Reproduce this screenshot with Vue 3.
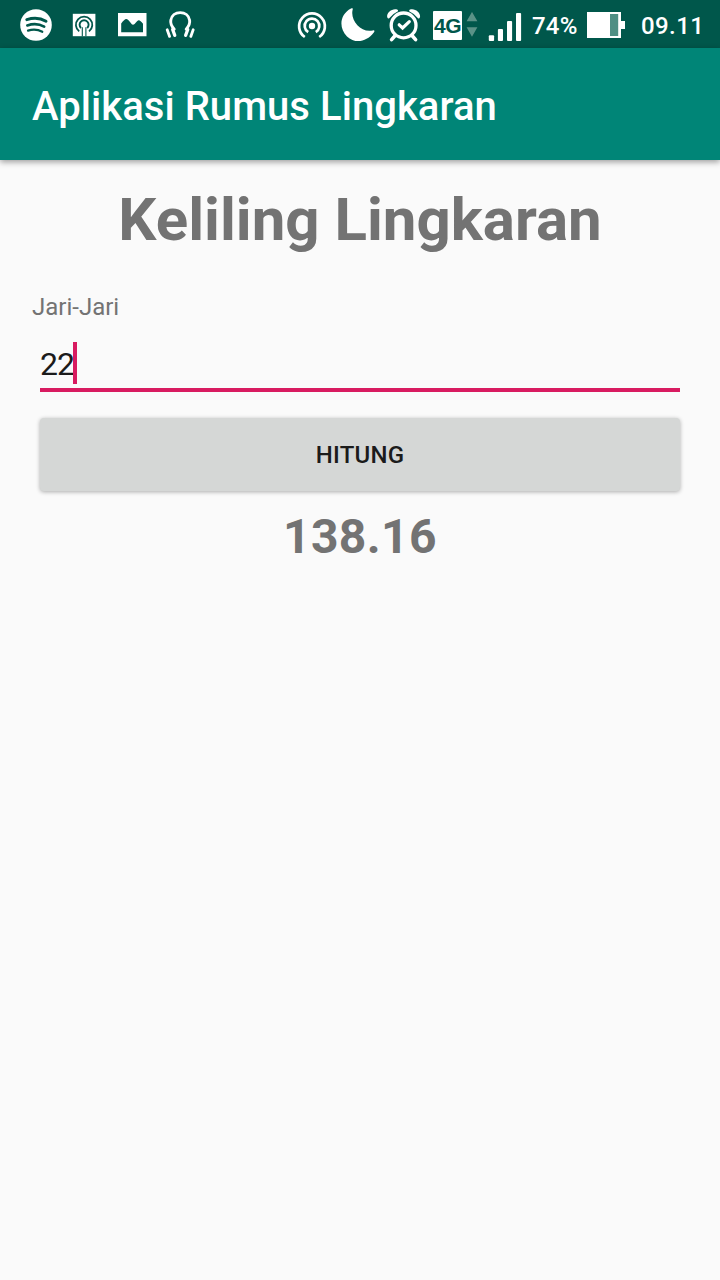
<script setup>
import { ref } from 'vue'

const radius = ref('22')
const result = ref('138.16')

function hitung() {
  result.value = (2 * 3.14 * Number(radius.value)).toFixed(2)
}
</script>

<template>
  <div class="screen">
    <header class="status">
      <div class="group left">
        <svg width="32" height="32" viewBox="20 9 32 32">
          <circle cx="36" cy="25" r="15.8" fill="#fff" />
          <g fill="none" stroke="#00574b" stroke-linecap="round">
            <path d="M26.8 19.6Q37.5 16.2 46 21.2" stroke-width="3" />
            <path d="M27.3 25.4Q36.6 22.4 44.2 26.6" stroke-width="2.6" />
            <path d="M28 30.6Q35.8 28.2 42.3 31.8" stroke-width="2.2" />
          </g>
        </svg>
        <svg width="24" height="24" viewBox="72 13 24 24">
          <rect x="72.8" y="13.8" width="22.6" height="22.4" fill="#fff" />
          <g fill="none" stroke="#00574b">
            <path d="M79.2 31.4A8.2 8.2 0 1 1 89 31.4" stroke-width="1.8" />
            <path d="M81 28A4.5 4.5 0 1 1 87.2 28" stroke-width="1.9" />
            <path d="M82.3 36.2V27.2M85.9 36.2V27.2" stroke-width="1.1" />
          </g>
        </svg>
        <svg width="30" height="26" viewBox="117 12 30 26">
          <path fill="#fff" fill-rule="evenodd" d="M118 13H146.5V36.2H118ZM121.2 32.2H143V23.8Q140.4 20.2 138.8 20.2Q137.4 20.4 134.6 24Q133 25.2 131.8 24.2Q128 19 126.2 19Q124.4 19 121.2 23.6Z" />
        </svg>
        <svg width="32" height="30" viewBox="164 10 32 30">
          <g fill="none" stroke="#fff" stroke-linecap="round">
            <path d="M174.2 29.2C171 25.4 170.3 22.8 170.8 20.2C171.6 15.6 175.4 12.6 180.2 12.6S188.8 15.6 189.6 20.2C190.1 22.8 189.4 25.4 186.2 29.2" stroke-width="2.9" />
            <path d="M172.6 29.4L174.8 35.4M187.8 29.4L185.6 35.4" stroke-width="3.2" />
            <path d="M167.2 29.8L169.6 36.4M193.2 29.8L190.8 36.4" stroke-width="2.8" />
          </g>
        </svg>
      </div>

      <div class="group right">
        <svg class="hotspot" width="30" height="30" viewBox="297 11 30 30">
          <circle cx="312" cy="26" r="3.2" fill="#fff" />
          <g fill="none" stroke="#fff" stroke-width="2.7">
            <path d="M308.2 32.2A7.3 7.3 0 1 1 315.8 32.2" />
            <path d="M304.8 37A12.9 12.9 0 1 1 319.2 37" />
          </g>
        </svg>
        <svg class="moon" width="36" height="36" viewBox="340 7 36 36">
          <path fill="#fff" d="M351 8.5C352.6 7.8 353.3 8.4 352.6 9.8C350 21 361.5 33.4 372.8 30.4C374.5 30 375 31 373.8 32.6C366.5 42.2 355 44 347 36.4C338.5 28 339.6 14.4 351 8.5Z" />
        </svg>
        <svg class="alarm" width="36" height="36" viewBox="386 8 36 36">
          <g fill="none" stroke="#fff" stroke-linecap="round">
            <circle cx="403.6" cy="25.4" r="12.4" stroke-width="3.3" />
            <path d="M395 35.8L391.6 39.6M412.2 35.8L415.6 39.6" stroke-width="3.6" />
            <path d="M399.2 24.8L402.6 28L409.3 21.7" stroke-width="3.2" />
          </g>
          <path fill="#fff" d="M387.5 17.8C385.4 14 392 7.4 397.6 9.8C398.2 10.3 398.2 11 397.6 11.5Q392.5 13.8 389.2 18.3Q388 19.1 387.5 17.8ZM419.7 17.8C421.8 14 415.2 7.4 409.6 9.8C409 10.3 409 11 409.6 11.5Q414.7 13.8 418 18.3Q419.2 19.1 419.7 17.8Z" />
        </svg>
        <span class="network">4G</span>
        <svg class="arrows" width="12" height="26" viewBox="466 12 12 26">
          <path fill="#5a9287" d="M472 11.9L477.4 21.2H466.6ZM472 36.7L477.4 27.2H466.6Z" />
        </svg>
        <svg class="signal" width="34" height="30" viewBox="488 12 34 30">
          <g fill="#fff">
            <rect x="488.8" y="35.2" width="5.3" height="5.8" rx="1" />
            <rect x="497.9" y="29" width="5.1" height="12" rx="1" />
            <rect x="507" y="21" width="5.1" height="20" rx="1" />
            <rect x="516" y="13" width="5.1" height="28" rx="1" />
          </g>
        </svg>
        <span class="percent">74%</span>
        <svg class="battery" width="38" height="26" viewBox="587 12 38 26">
          <path fill="#fff" d="M587 12H621V21H625V29H621V38H587Z" />
          <rect x="610" y="14" width="8.2" height="22" fill="#4f8f84" />
        </svg>
        <span class="clock">09.11</span>
      </div>
    </header>

    <div class="appbar">Aplikasi Rumus Lingkaran</div>

    <main>
      <h1>Keliling Lingkaran</h1>
      <label>Jari-Jari</label>
      <div class="field"><span>{{ radius }}</span><i class="caret"></i></div>
      <button @click="hitung">HITUNG</button>
      <output>{{ result }}</output>
    </main>
  </div>
</template>

<style>
body {
  background: #fafafa;
}
</style>

<style scoped>
.screen {
  width: 720px;
  height: 1280px;
  background: #fafafa;
  font-family: Roboto, sans-serif;
  display: flex;
  flex-direction: column;
  overflow: hidden;
}
svg {
  display: block;
  flex: none;
}
.status {
  height: 48px;
  background: #00574b;
  display: flex;
  justify-content: space-between;
  align-items: flex-start;
  color: #fff;
  flex: none;
}
.group {
  display: flex;
  align-items: center;
  height: 50px;
}
.left {
  padding-left: 20px;
  gap: 20px;
}
.left svg:nth-child(3) {
  margin-left: 1px;
}
.left svg:nth-child(4) {
  margin-left: -3px;
}
.right {
  padding-right: 16px;
}
.hotspot {
  margin: 2px 13px 0 0;
}
.moon {
  margin-right: 10px;
}
.alarm {
  margin: 2px 11px 0 0;
}
.network {
  width: 29px;
  height: 29px;
  margin-right: 4px;
  background: #fff;
  color: #00574b;
  font: bold 21px/29px "Liberation Sans", sans-serif;
  letter-spacing: -0.6px;
  text-align: center;
  border-radius: 1px;
}
.arrows {
  margin-right: 10px;
}
.signal {
  margin: 4px 10px 0 0;
}
.percent,
.clock {
  padding-top: 2px;
  font-weight: 500;
  font-size: 24px;
  line-height: 28px;
  white-space: nowrap;
}
.percent {
  width: 46px;
  margin-right: 9px;
  letter-spacing: 0.2px;
}
.battery {
  margin-right: 16px;
}
.clock {
  width: 63px;
  letter-spacing: 0.4px;
}
.appbar {
  height: 112px;
  box-sizing: border-box;
  flex: none;
  padding: 5px 32px 0;
  background: #008577;
  color: #fff;
  font-size: 40px;
  font-weight: 500;
  letter-spacing: 0.05px;
  line-height: 108px;
  box-shadow: 0 2px 6px rgba(0, 0, 0, 0.38);
}
main {
  display: flex;
  flex-direction: column;
  padding: 24px 32px 0;
  color: #737373;
}
h1 {
  margin: 0 0 38px;
  font-size: 60px;
  font-weight: 700;
  line-height: 71px;
  text-align: center;
  white-space: nowrap;
}
label {
  font-size: 24px;
  line-height: 28px;
}
.field {
  display: flex;
  height: 46px;
  margin: 21px 8px 26px;
  border-bottom: 4px solid #d81b60;
  color: #1b1b1b;
  font-size: 32px;
  line-height: 44px;
}
.field span {
  letter-spacing: -1px;
}
.caret {
  width: 4px;
  height: 42px;
  margin-left: -1px;
  background: #d81b60;
}
button {
  height: 73px;
  margin: 0 8px 18px;
  padding: 1px 0 0;
  border: 0;
  border-radius: 4px;
  background: #d5d7d6;
  color: #1b1b1b;
  font: 500 24px/28px Roboto, sans-serif;
  letter-spacing: 0.25px;
  box-shadow: 0 1px 4px rgba(0, 0, 0, 0.32);
}
output {
  font-size: 48px;
  font-weight: 700;
  letter-spacing: 0.4px;
  line-height: 56px;
  text-align: center;
}
</style>
